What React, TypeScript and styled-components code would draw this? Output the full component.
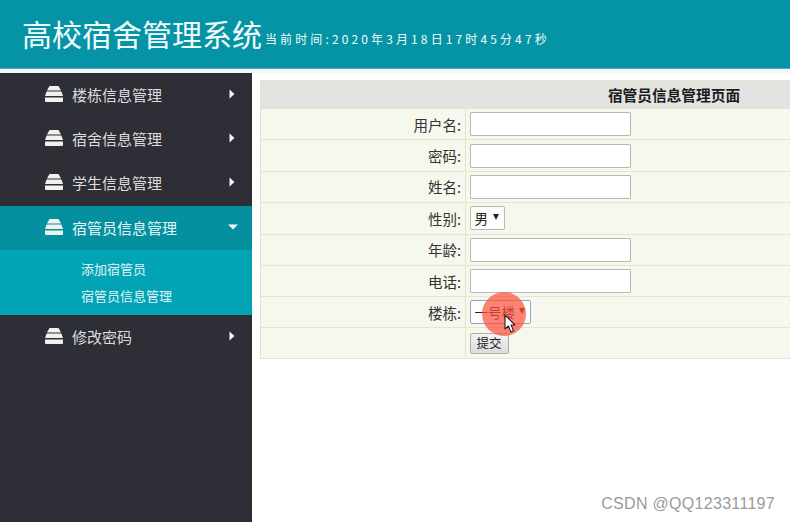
import React from "react";
import styled, { createGlobalStyle } from "styled-components";

const CJK = `"Noto Sans CJK SC", "Liberation Sans", sans-serif`;

const Global = createGlobalStyle`
  html, body { margin: 0; padding: 0; background: #fff; overflow: hidden; }
  body { width: 790px; height: 522px; font-family: ${CJK}; }
  * { box-sizing: border-box; }
`;

const Page = styled.div`
  position: relative;
  width: 790px;
  height: 522px;
  overflow: hidden;
  display: flex;
  flex-direction: column;
`;

const Header = styled.header`
  height: 69px;
  flex: none;
  background: #0594a5;
  border-bottom: 1px solid #4fa9b2;
  color: #f2fbfb;
  padding: 0 0 15px 22px;
  display: flex;
  align-items: flex-end;
`;

const Title = styled.h1`
  margin: 0;
  font-size: 30px;
  line-height: 40px;
  font-weight: 400;
  white-space: nowrap;
`;

const Clock = styled.span`
  font-size: 12px;
  line-height: 20px;
  letter-spacing: 3.12px;
  margin-left: 3px;
  padding-bottom: 4px;
  white-space: nowrap;
`;

const Body = styled.div`
  flex: 1;
  display: flex;
  min-height: 0;
  background: linear-gradient(#f1f8f6 4px, #fff 4px);
  padding-top: 4px;
`;

const Sidebar = styled.nav`
  width: 252px;
  flex: none;
  background: #2e2e36;
  display: flex;
  flex-direction: column;
`;

const MenuRow = styled.div<{ $active?: boolean }>`
  height: 44px;
  flex: none;
  display: flex;
  align-items: center;
  padding: 0 18px 2px 45px;
  color: ${(p) => (p.$active ? "#e4f6f7" : "#dcdcde")};
  background: ${(p) => (p.$active ? "#05909f" : "transparent")};
  font-size: 15px;
  margin-top: ${(p) => (p.$active ? "1px" : "0")};
`;

const MenuLabel = styled.span`
  flex: 1;
  margin-left: 9px;
  white-space: nowrap;
`;

const SubMenu = styled.div`
  height: 65px;
  flex: none;
  background: #02a3b5;
  padding: 9px 0 0 81px;
  display: flex;
  flex-direction: column;
  gap: 7px;
`;

const SubItem = styled.a`
  font-size: 13px;
  line-height: 20px;
  color: #e0f5f6;
  white-space: nowrap;
`;

const Main = styled.main`
  flex: 1;
  min-width: 0;
  padding: 7px 0 0 8px;
  overflow: hidden;
`;

const Form = styled.div`
  width: 828px;
  border: 1px solid #e3e5cf;
  background: #f6f7ed;
  color: #2a2a2a;
`;

const FormHead = styled.div`
  height: 28px;
  background: #e3e4e2;
  border-bottom: 1px solid #e3e5cf;
  font-size: 14.7px;
  line-height: 27px;
  font-weight: 700;
  text-align: center;
  color: #1c1c1c;
`;

const Row = styled.div<{ $h?: number }>`
  display: grid;
  grid-template-columns: 205px 1fr;
  height: ${(p) => p.$h ?? 31.4}px;
  border-bottom: 1px solid #e3e5cf;
  &:last-child { border-bottom: none; }
`;

const Label = styled.label`
  border-right: 1px solid #e3e5cf;
  padding: 0 4px 0 0;
  font-size: 14.5px;
  color: #333;
  display: flex;
  align-items: center;
  justify-content: flex-end;
`;

const Field = styled.div`
  display: flex;
  align-items: center;
  padding-left: 3.5px;
`;

const TextInput = styled.div`
  width: 161px;
  height: 24px;
  background: #fff;
  border: 1px solid #b9b9b4;
  border-radius: 1px;
`;

const Select = styled.div<{ $w: number; $focus?: boolean }>`
  width: ${(p) => p.$w}px;
  height: 24px;
  background: #fdfdfb;
  border: 1px solid ${(p) => (p.$focus ? "#88a9c9" : "#b9b9b4")};
  border-radius: 2px;
  font-size: 13.5px;
  color: #222;
  display: flex;
  align-items: center;
  justify-content: space-between;
  padding: 0 5px 0 4px;
  white-space: nowrap;
`;

const Caret = styled.span`
  width: 0;
  height: 0;
  border-left: 3px solid transparent;
  border-right: 3px solid transparent;
  border-top: 6px solid #222;
  margin-bottom: 3px;
`;

const Submit = styled.button`
  width: 39px;
  height: 21px;
  padding: 0;
  background: linear-gradient(#f4f4f2, #dcdcda);
  border: 1px solid #aeaeaa;
  border-radius: 2px;
  font-family: ${CJK};
  font-size: 12.5px;
  line-height: 18px;
  color: #222;
`;

const ClickHalo = styled.div`
  position: absolute;
  left: 482px;
  top: 292px;
  width: 44px;
  height: 44px;
  border-radius: 50%;
  background: rgba(253, 82, 62, 0.72);
`;

const Cursor = styled.svg`
  position: absolute;
  left: 504px;
  top: 314px;
`;

const Watermark = styled.div`
  position: absolute;
  right: 15px;
  top: 495px;
  font-family: "Liberation Sans", sans-serif;
  font-size: 16px;
  line-height: 18px;
  letter-spacing: 0.3px;
  color: #9a9a9a;
  white-space: nowrap;
`;

const Stack = () => (
  <svg width="18" height="16" viewBox="0 0 18 16" fill="#f1f1ee" aria-hidden="true">
    <path d="M4.5 0h9L16 4.4H2z" />
    <path d="M1.6 5.6h14.8L18 10H0z" />
    <path d="M0 11.4h18V15a1 1 0 0 1-1 1H1a1 1 0 0 1-1-1z" />
  </svg>
);

const ArrowRight = () => (
  <svg width="6" height="10" viewBox="0 0 6 10" fill="#f4f4f4" aria-hidden="true" style={{ marginRight: -1 }}>
    <path d="M0.5 0.5 5.5 5 0.5 9.5z" />
  </svg>
);

const ArrowDown = () => (
  <svg width="10" height="6" viewBox="0 0 10 6" fill="#e9f8f8" aria-hidden="true" style={{ marginRight: -4 }}>
    <path d="M0 0.5h10L5 5.5z" />
  </svg>
);

const menuTop = ["楼栋信息管理", "宿舍信息管理", "学生信息管理"];
const inputsA = ["用户名", "密码", "姓名"];
const inputsB = ["年龄", "电话"];

export default function App() {
  return (
    <Page>
      <Global />
      <Header>
        <Title>高校宿舍管理系统</Title>
        <Clock>当前时间:2020年3月18日17时45分47秒</Clock>
      </Header>
      <Body>
        <Sidebar>
          {menuTop.map((m) => (
            <MenuRow key={m}>
              <Stack />
              <MenuLabel>{m}</MenuLabel>
              <ArrowRight />
            </MenuRow>
          ))}
          <MenuRow $active>
            <Stack />
            <MenuLabel>宿管员信息管理</MenuLabel>
            <ArrowDown />
          </MenuRow>
          <SubMenu>
            <SubItem>添加宿管员</SubItem>
            <SubItem>宿管员信息管理</SubItem>
          </SubMenu>
          <MenuRow>
            <Stack />
            <MenuLabel>修改密码</MenuLabel>
            <ArrowRight />
          </MenuRow>
        </Sidebar>
        <Main>
          <Form>
            <FormHead>宿管员信息管理页面</FormHead>
            {inputsA.map((l) => (
              <Row key={l}>
                <Label>{l}:</Label>
                <Field><TextInput /></Field>
              </Row>
            ))}
            <Row>
              <Label>性别:</Label>
              <Field>
                <Select $w={35}>男<Caret /></Select>
              </Field>
            </Row>
            {inputsB.map((l) => (
              <Row key={l}>
                <Label>{l}:</Label>
                <Field><TextInput /></Field>
              </Row>
            ))}
            <Row $h={31}>
              <Label>楼栋:</Label>
              <Field>
                <Select $w={61} $focus>一号楼<Caret /></Select>
              </Field>
            </Row>
            <Row $h={29.5}>
              <Label />
              <Field>
                <Submit>提交</Submit>
              </Field>
            </Row>
          </Form>
        </Main>
      </Body>
      <ClickHalo />
      <Cursor width="14" height="20" viewBox="0 0 14 20" aria-hidden="true">
        <path d="M1 1v14l3.4-3 2.4 6 2.8-1.2-2.5-5.8H11z" fill="#fff" stroke="#222" strokeWidth="1.1" strokeLinejoin="round" />
      </Cursor>
      <Watermark>CSDN @QQ123311197</Watermark>
    </Page>
  );
}
